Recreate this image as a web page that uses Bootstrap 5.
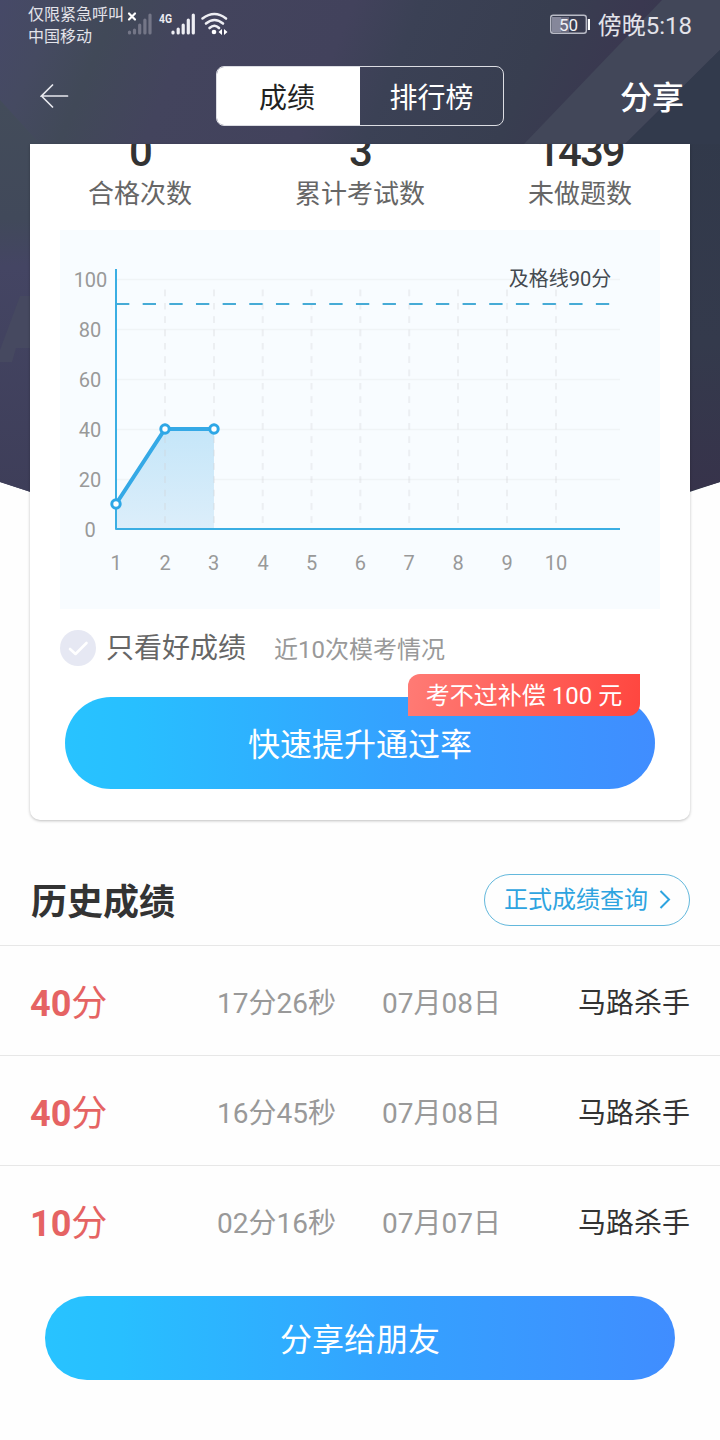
<!DOCTYPE html>
<html lang="zh-CN">
<head>
<meta charset="utf-8">
<meta name="viewport" content="width=device-width, initial-scale=1">
<title>成绩</title>
<link href="https://cdn.jsdelivr.net/npm/bootstrap@5.3.0/dist/css/bootstrap.min.css" rel="stylesheet">
<style>
  body { font-family: Roboto, "Noto Sans CJK SC", sans-serif; background: #fefefe; color: #333; overflow: hidden; }
  .screen { width: 720px; height: 1440px; }
  .backdrop { top: 0; left: 0; z-index: -1; }
  .statusbar { height: 48px; padding: 0 28px; color: #e3e3ea; }
  .carrier { font-size: 16px; line-height: 22px; padding-top: 4px; width: 99px; }
  .clock { font-size: 24px; line-height: 52px; }
  .titlebar { height: 96px; padding: 0 36px 0 40px; }
  .titlebar .side { width: 98px; }
  .titlebar .share { width: 102px; }
  .tabs { width: 288px; height: 60px; border-radius: 8px; border: 1px solid #dcdde3; overflow: hidden; }
  .tabs .btn { border: 0; border-radius: 0; font-size: 28px; line-height: 60px; padding: 2px 0 0; color: #fff; }
  .tabs .btn.active { background: #fff; color: #222; padding-right: 3px; }
  .share { font-size: 32px; font-weight: 500; line-height: 96px; padding-top: 3px; }
  .panel { margin: 0 30px; height: 676px; background: #fff; border-radius: 0 0 10px 10px; box-shadow: 0 1px 3px rgba(0,0,0,.25); }
  .stats { height: 86px; overflow: hidden; }
  .figure-num { font-size: 42px; font-weight: 500; letter-spacing: -2px; line-height: 44px; height: 30px; margin-top: -14px; }
  .figure-label { font-size: 26px; line-height: 36px; color: #666; margin-top: 16px; }
  .chart { display: block; margin: 0 30px; }
  .filter { height: 78px; padding: 0 30px; }
  .filter .main { font-size: 28px; color: #666; margin-left: 10px; line-height: 40px; padding-top: 2px; }
  .filter .note { font-size: 24px; color: #999; margin-left: 28px; line-height: 40px; padding-top: 3px; }
  .cta { background: linear-gradient(90deg, #28c3ff 0%, #28bfff 12%, #34a2ff 55%, #408dff 100%); color: #fff; border: 0; font-size: 32px; padding: 0; }
  .cta:hover { color: #fff; }
  .cta-up { width: 590px; height: 92px; margin: 10px 35px 0; line-height: 97px; }
  .cta-share { width: 630px; height: 84px; margin: 21px 45px 0; line-height: 88px; }
  .promo { top: -23px; right: 15px; width: 232px; height: 42px; font-size: 24px; line-height: 45px; color: #fff; border-radius: 12px 0 12px 0; background: linear-gradient(100deg, #ff7b75, #ff463f); white-space: pre; }
  .history-head { height: 125px; padding: 34px 30px 0 31px; }
  .history-head h2 { font-size: 36px; font-weight: 700; margin: 0; line-height: 50px; padding-top: 6px; }
  .query { width: 206px; height: 52px; border: 1px solid #63b8dc; color: #2ea4e0; font-size: 24px; line-height: 52px; padding: 0 18px 0 19px; }
  .record { height: 110px; padding: 6px 30px 0; border-top: 1px solid #e7e7e7; font-size: 28px; color: #999; }
  .score { width: 187px; font-size: 36px; color: #e56363; }
  .duration { width: 165px; }
  .rank-name { color: #333; }
  .axis-text { font-size: 20px; fill: #999; text-anchor: middle; }
</style>
</head>
<body>
<svg class="backdrop position-absolute" width="720" height="600" aria-hidden="true">
  <defs>
    <linearGradient id="night" gradientUnits="userSpaceOnUse" x1="0" y1="0" x2="720" y2="300">
      <stop offset="0" stop-color="#464967"/><stop offset=".07" stop-color="#454a61"/><stop offset=".14" stop-color="#414958"/><stop offset=".24" stop-color="#43445d"/><stop offset=".42" stop-color="#42425c"/><stop offset=".5" stop-color="#3b4155"/><stop offset=".66" stop-color="#383e50"/><stop offset=".76" stop-color="#3a3850"/><stop offset="1" stop-color="#303749"/>
    </linearGradient>
    <linearGradient id="leftside" x1="0" y1="0" x2="0" y2="1">
      <stop offset="0" stop-color="#434c5a"/><stop offset=".3" stop-color="#41495a"/><stop offset=".42" stop-color="#444563"/><stop offset="1" stop-color="#3e3e59"/>
    </linearGradient>
    <linearGradient id="rightside" x1="0" y1="0" x2="0" y2="1">
      <stop offset="0" stop-color="#31394a"/><stop offset=".6" stop-color="#343a4c"/><stop offset="1" stop-color="#37334b"/>
    </linearGradient>
  </defs>
  <path d="M0 0H720V482L360 600L0 482Z" fill="url(#night)"/>
  <path d="M0 100L40 144V495L0 482Z" fill="url(#leftside)"/>
  <path d="M720 120L690 144V491L720 482Z" fill="url(#rightside)"/>
  <path d="M662 0H720V50L625 144H524Z" fill="#424759"/>
  <path d="M720 50V144H625Z" fill="#323a4c"/>
  <path d="M20 296H30V348H16L12 362H0V350Z" fill="#464960"/>
</svg>

<main class="screen d-flex flex-column">
  <header>
    <div class="statusbar d-flex justify-content-between">
      <div class="d-flex">
        <div class="carrier text-nowrap">仅限紧急呼叫<br>中国移动</div>
        <svg width="104" height="48" viewBox="127 0 104 48" fill="none" stroke-linecap="round">
          <path d="M129 13.5L135 19.5M135 13.5L129 19.5" stroke="#fff" stroke-width="2.2"/>
          <path d="M129.500 32V33M134.500 30V33M139.700 25V33M144.900 20V33M150 15V33" stroke="#747687" stroke-width="3.200"/>
          <text x="159" y="22.500" font-size="13" font-weight="700" fill="#ececf2" textLength="13" lengthAdjust="spacingAndGlyphs">4G</text>
          <path d="M173 32V33M178.200 29V33M183.200 25V33M188.300 20V33M193.300 15V33" stroke="#eeeef3" stroke-width="3.200"/>
          <path d="M202.500 18.500Q214.500 9.500 226 18.500M206 23.500Q214.500 16.500 223 23.500M209.500 28Q214.500 23.500 219 28" stroke="#eeeef3" stroke-width="2.600"/>
          <circle cx="214" cy="32" r="2.300" fill="#fff"/>
          <path d="M222 29V35L218.500 32ZM224 29V35L227.500 32Z" fill="#fff"/>
        </svg>
      </div>
      <div class="d-flex gap-2">
        <svg width="40" height="48" viewBox="550 0 40 48">
          <rect x="552" y="17" width="9" height="15" fill="#85879a"/>
          <rect x="561" y="17" width="8" height="15" fill="#6a6b80"/>
          <rect x="550.700" y="15.200" width="35.600" height="18" rx="2.500" fill="none" stroke="#b9bbc6" stroke-width="1.400"/>
          <path d="M589 19V30" stroke="#fff" stroke-width="2.400"/>
          <text x="568.500" y="30.500" font-size="17" fill="#f1f1f5" text-anchor="middle">50</text>
        </svg>
        <div class="clock">傍晚5:18</div>
      </div>
    </div>
    <nav class="titlebar d-flex align-items-center justify-content-between">
      <div class="side">
        <svg width="30" height="28" viewBox="0 0 30 28" fill="none" stroke="#e8e8ee" stroke-width="1.700" stroke-linecap="round"><path d="M27.500 14H1.500L12.500 3M1.500 14L12.500 25"/></svg>
      </div>
      <div class="tabs d-flex">
        <button class="btn active w-50">成绩</button>
        <button class="btn w-50">排行榜</button>
      </div>
      <div class="share text-end text-white">分享</div>
    </nav>
  </header>

  <section class="panel flex-shrink-0">
    <div class="stats row g-0 text-center">
      <div class="col"><div class="figure-num">0</div><div class="figure-label">合格次数</div></div>
      <div class="col"><div class="figure-num">3</div><div class="figure-label">累计考试数</div></div>
      <div class="col"><div class="figure-num">1439</div><div class="figure-label">未做题数</div></div>
    </div>
    <svg class="chart" width="600" height="379" viewBox="60 230 600 379">
      <defs><linearGradient id="area" x1="0" y1="0" x2="0" y2="1"><stop offset="0" stop-color="#c5e6f9"/><stop offset="1" stop-color="#dceefa"/></linearGradient></defs>
      <rect x="60" y="230" width="600" height="379" fill="#f8fcff"/>
      <path d="M116 279.500H620M116 329.500H620M116 379.500H620M116 429.500H620M116 479.500H620" stroke="#f0f4f6" stroke-width="1.500"/>
      <path d="M116 504L165 429H214V529H116Z" fill="url(#area)"/>
      <path d="M165 523V289M214 523V289M262.700 523V289M311.500 523V289M360.300 523V289M409.200 523V289M458 523V289M507 523V289M556 523V289" stroke="#cfcfd4" stroke-opacity=".3" stroke-width="2" stroke-dasharray="6.670 6.670"/>
      <path d="M116 304H611" stroke="#46abd6" stroke-width="2" stroke-dasharray="13.330 13.330"/>
      <path d="M116 269V529H620" fill="none" stroke="#3baee3" stroke-width="2" stroke-linejoin="round"/>
      <path d="M116 504L165 429H214" fill="none" stroke="#35a9e6" stroke-width="4"/>
      <g fill="#fff" stroke="#2ea7e6" stroke-width="3"><circle cx="116" cy="504" r="4.200"/><circle cx="165" cy="429" r="4.200"/><circle cx="214" cy="429" r="4.200"/></g>
      <text x="560" y="285.500" font-size="20" fill="#444a50" text-anchor="middle">及格线90分</text>
      <g class="axis-text">
        <text x="90.500" y="286.500">100</text><text x="90" y="336.500">80</text><text x="90" y="386.500">60</text><text x="90" y="436.500">40</text><text x="90" y="486.500">20</text><text x="90" y="536.500">0</text>
        <text x="116" y="569.500">1</text><text x="165" y="569.500">2</text><text x="213.500" y="569.500">3</text><text x="263" y="569.500">4</text><text x="311.500" y="569.500">5</text><text x="360.300" y="569.500">6</text><text x="409.200" y="569.500">7</text><text x="458" y="569.500">8</text><text x="507" y="569.500">9</text><text x="556" y="569.500">10</text>
      </g>
    </svg>
    <div class="filter d-flex align-items-center">
      <svg width="36" height="36" viewBox="0 0 36 36"><circle cx="18" cy="18" r="18" fill="#e6e8f3"/><path d="M10 19L15.500 24L26.500 13" fill="none" stroke="#fff" stroke-width="2.600" stroke-linecap="round" stroke-linejoin="round"/></svg>
      <span class="main">只看好成绩</span>
      <span class="note">近10次模考情况</span>
    </div>
    <button class="btn cta cta-up rounded-pill position-relative">快速提升通过率<span class="promo position-absolute">考不过补偿 100 元</span></button>
  </section>

  <section>
    <div class="history-head d-flex justify-content-between align-items-center">
      <h2>历史成绩</h2>
      <a class="query rounded-pill d-flex align-items-center justify-content-between text-decoration-none" href="#">正式成绩查询
        <svg width="12" height="20" viewBox="0 0 12 20" fill="none" stroke="#2ea4e0" stroke-width="2"><path d="M1.500 1L10 9.500L1.500 18"/></svg>
      </a>
    </div>
    <div class="record d-flex align-items-center"><div class="score"><b>40</b>分</div><div class="duration">17分26秒</div><div>07月08日</div><div class="ms-auto rank-name">马路杀手</div></div>
    <div class="record d-flex align-items-center"><div class="score"><b>40</b>分</div><div class="duration">16分45秒</div><div>07月08日</div><div class="ms-auto rank-name">马路杀手</div></div>
    <div class="record d-flex align-items-center"><div class="score"><b>10</b>分</div><div class="duration">02分16秒</div><div>07月07日</div><div class="ms-auto rank-name">马路杀手</div></div>
    <button class="btn cta cta-share rounded-pill">分享给朋友</button>
  </section>
</main>
<script src="https://cdn.jsdelivr.net/npm/bootstrap@5.3.0/dist/js/bootstrap.bundle.min.js"></script>
</body>
</html>
